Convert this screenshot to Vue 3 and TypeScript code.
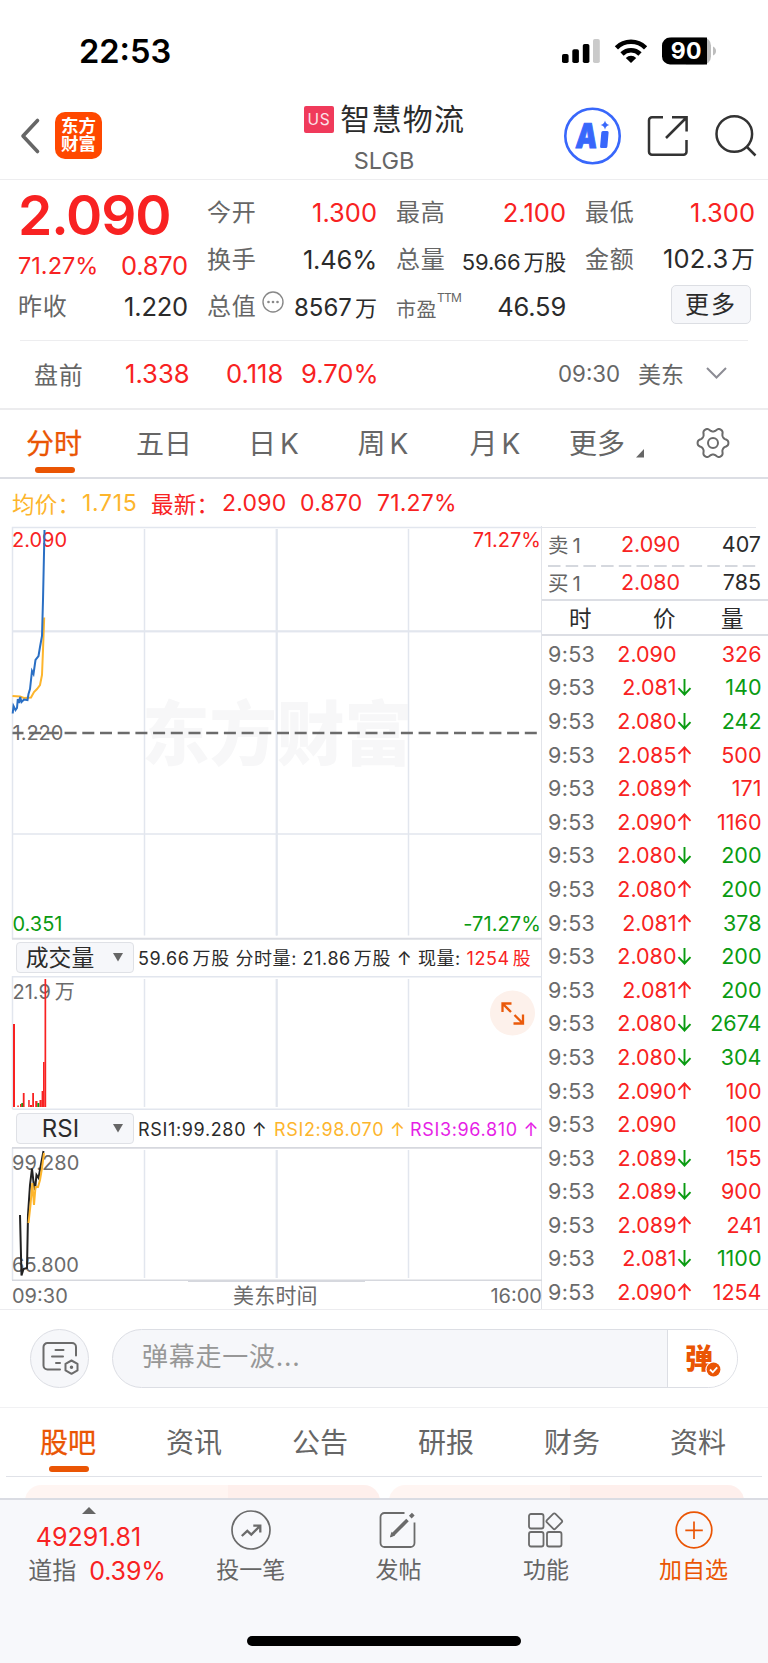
<script setup lang="ts">
type Dir = 'up' | 'down' | ''
interface Tick { price: string; dir: Dir; vol: string; side: 'red' | 'green' }

const t = (price: string, dir: Dir, vol: string, side: 'red' | 'green'): Tick => ({ price, dir, vol, side })
const ticks: Tick[] = [
  t('2.090', '', '326', 'red'),
  t('2.081', 'down', '140', 'green'),
  t('2.080', 'down', '242', 'green'),
  t('2.085', 'up', '500', 'red'),
  t('2.089', 'up', '171', 'red'),
  t('2.090', 'up', '1160', 'red'),
  t('2.080', 'down', '200', 'green'),
  t('2.080', 'up', '200', 'green'),
  t('2.081', 'up', '378', 'green'),
  t('2.080', 'down', '200', 'green'),
  t('2.081', 'up', '200', 'green'),
  t('2.080', 'down', '2674', 'green'),
  t('2.080', 'down', '304', 'green'),
  t('2.090', 'up', '100', 'red'),
  t('2.090', '', '100', 'red'),
  t('2.089', 'down', '155', 'red'),
  t('2.089', 'down', '900', 'red'),
  t('2.089', 'up', '241', 'red'),
  t('2.081', 'down', '1100', 'green'),
  t('2.090', 'up', '1254', 'red'),
]

const newsTabs = ['股吧', '资讯', '公告', '研报', '财务', '资料']
const columns = [144.5, 276.5, 408.5]

interface Bar { x: number; y: number; w: number; c: string }
const bars: Bar[] = [
  { x: 13, y: 1024, w: 2, c: '#f82222' },
  { x: 17.3, y: 1105.5, w: 1.5, c: '#f82222' },
  { x: 20, y: 1104, w: 1.5, c: '#f82222' },
  { x: 21.3, y: 1103, w: 2, c: '#0a9b12' },
  { x: 22.8, y: 1093, w: 1.8, c: '#f82222' },
  { x: 28.2, y: 1100, w: 1.5, c: '#f82222' },
  { x: 30, y: 1105, w: 2, c: '#f82222' },
  { x: 32.2, y: 1093, w: 1.8, c: '#f82222' },
  { x: 35.2, y: 1101, w: 2.3, c: '#f82222' },
  { x: 37.4, y: 1103, w: 2, c: '#0a9b12' },
  { x: 39.5, y: 1100, w: 2.2, c: '#f82222' },
  { x: 41.6, y: 1091, w: 1.6, c: '#f82222' },
  { x: 43, y: 1062, w: 1.6, c: '#f82222' },
  { x: 44.5, y: 979, w: 1.7, c: '#f82222' },
]

const gearPath = (() => {
  const pts: string[] = []
  for (let i = 0; i < 120; i++) {
    const a = (i / 120) * Math.PI * 2
    const r = 13.5 + 1.9 * Math.tanh(1.3 * Math.cos(6 * a)) / Math.tanh(1.3)
    pts.push(`${(17 + r * Math.cos(a)).toFixed(2)} ${(17 + r * Math.sin(a)).toFixed(2)}`)
  }
  return `M${pts.join('L')}Z`
})()
</script>

<template>
  <div class="page">
    <div class="status">
      <span class="clock">22:53</span>
      <svg class="sys" width="160" height="40" viewBox="558 32 160 40">
        <rect x="562" y="54" width="6.6" height="9" rx="1.8" />
        <rect x="572.3" y="49.3" width="6.6" height="13.7" rx="1.8" />
        <rect x="582.8" y="44" width="6.6" height="19" rx="1.8" />
        <rect x="593" y="39" width="6.8" height="24" rx="1.8" fill="#cacaca" />
        <g fill="none" stroke="#000" stroke-width="4.6">
          <path d="M616.4 47.8a20.8 20.8 0 0 1 29.2 0" />
          <path d="M622 54a12.8 12.8 0 0 1 18 0" />
        </g>
        <path d="M631 63l-5.2-5.1a7.6 7.6 0 0 1 10.4 0z" />
        <path d="M671 37.5h32a8 8 0 0 1 8 8v11a8 8 0 0 1-8 8h-17z" fill="#bdbdbd" />
        <path d="M707 37.6v26.800h-37a8 8 0 0 1-8-8v-10.800a8 8 0 0 1 8-8z" />
        <path d="M713 46.500q3 1.500 3 4.500t-3 4.500z" fill="#bdbdbd" />
        <text x="686.200" y="59.400" text-anchor="middle" class="batt">90</text>
      </svg>
    </div>

    <header class="head">
      <svg class="back" width="24" height="40" viewBox="0 0 24 40"><path d="M18.500 4.500L4 20L18.500 35.500" fill="none" stroke="#666" stroke-width="3.600" stroke-linecap="round" stroke-linejoin="round" /></svg>
      <div class="logo"><span>东方</span><span>财富</span></div>
      <div class="title">
        <div class="name"><span class="us">US</span><span class="cn">智慧物流</span></div>
        <div class="code">SLGB</div>
      </div>
      <svg class="acts" width="204" height="64" viewBox="560 104 204 64">
        <circle cx="592.500" cy="136" r="27.200" fill="#fff" stroke="#3867fb" stroke-width="2.600" />
        <g transform="translate(575 147.500) skewX(-5)">
          <text x="0" y="0" class="ai" textLength="21.500" lengthAdjust="spacingAndGlyphs">A</text>
          <rect x="25" y="-16.500" width="7.300" height="17" rx="1.500" fill="#3867fb" />
        </g>
        <path d="M605 120.500q.8 3.900 4.500 4.500q-3.700.6-4.500 4.700q-.8-4.100-4.500-4.700q3.700-.6 4.500-4.500z" fill="#3867fb" />
        <g fill="none" stroke="#333" stroke-width="2.500">
          <path d="M663 117.300h-11a3 3 0 0 0-3 3v31.500a3 3 0 0 0 3 3h31.500a3 3 0 0 0 3-3V140" />
          <path d="M672 117.300h14.600v14.200M686 118l-20 20" />
          <circle cx="734.300" cy="134" r="17.800" />
          <path d="M746.500 146.500l9 9" />
        </g>
      </svg>
    </header>

    <section class="quote">
      <div class="stats">
        <div class="cell big">2.090</div>
        <div class="cell"><label>今开</label><b class="red">1.300</b></div>
        <div class="cell"><label>最高</label><b class="red">2.100</b></div>
        <div class="cell"><label>最低</label><b class="red">1.300</b></div>

        <div class="cell chg"><span class="pct">71.27%</span><b class="red">0.870</b></div>
        <div class="cell"><label>换手</label><b>1.46%</b></div>
        <div class="cell"><label>总量</label><b class="small">59.66<i>万股</i></b></div>
        <div class="cell"><label>金额</label><b class="wide">102.3<i>万</i></b></div>

        <div class="cell"><label>昨收</label><b>1.220</b></div>
        <div class="cell">
          <label>总值</label>
          <svg class="dots" width="24" height="24" viewBox="0 0 24 24">
            <circle cx="12" cy="12" r="10" fill="none" stroke="#888" stroke-width="1.400" />
            <circle cx="7.500" cy="12" r="1.300" fill="#888" /><circle cx="12" cy="12" r="1.300" fill="#888" /><circle cx="16.500" cy="12" r="1.300" fill="#888" />
          </svg>
          <b class="mid">8567<i>万</i></b>
        </div>
        <div class="cell"><label class="pe">市盈<sup>TTM</sup></label><b>46.59</b></div>
        <div class="cell"><button class="more">更多</button></div>
      </div>
      <div class="pre">
        <span class="lab">盘前</span>
        <span class="red">1.338</span><span class="red">0.118</span><span class="red">9.70%</span>
        <span class="time">09:30</span><span class="zone">美东</span>
        <svg width="24" height="16" viewBox="0 0 24 16"><path d="M3 3l9.500 9.500L22 3" fill="none" stroke="#8c8c94" stroke-width="2" /></svg>
      </div>
    </section>

    <nav class="ktabs">
      <span class="on">分时</span>
      <span>五日</span>
      <span class="k">日<em>K</em></span>
      <span class="k">周<em>K</em></span>
      <span class="k">月<em>K</em></span>
      <span>更多</span>
      <svg class="tri" width="8" height="9" viewBox="0 0 8 9"><path d="M8 0v8.500H0z" fill="#666" /></svg>
      <svg class="gear" width="34" height="34" viewBox="0 0 34 34" fill="none" stroke="#6b6b6b" stroke-width="2">
        <path :d="gearPath" /><circle cx="17" cy="17" r="5" />
      </svg>
    </nav>

    <div class="info">
      <span class="avg">均价：</span><span class="avg">1.715</span>
      <span class="red">最新：</span><span class="red">2.090</span><span class="red">0.870</span><span class="red">71.27%</span>
    </div>

    <main class="board">
      <div class="left">
        <svg width="542" height="414" viewBox="0 526 542 414">
          <text x="142" y="760" class="wm" textLength="270" lengthAdjust="spacingAndGlyphs">东方财富</text>
          <g stroke="#e2e6ee" stroke-width="1.500" fill="none">
            <path d="M12.500 939V527.500H542" />
            <path v-for="c in columns" :key="c" :d="`M${c} 529V935.500`" />
            <path d="M12.500 631.500H542M12.500 834H542" />
            <path d="M276.800 529V935.500M12.500 631.300H542" stroke-width="2" />
          </g>
          <path d="M12 938.700H542" stroke="#dadce2" stroke-width="2" />
          <text x="12.500" y="931" class="ax green">0.351</text>
          <text x="541" y="931" text-anchor="end" class="ax green" letter-spacing=".1">-71.27%</text>
          <text x="541" y="547.300" text-anchor="end" class="ax red">71.27%</text>
          <text x="12.500" y="740" class="ax">1.220</text>
          <path d="M12.500 733H541" stroke="#6b6b6b" stroke-width="2.300" stroke-dasharray="12 5.700" stroke-dashoffset="1" />
          <text x="12" y="547.300" class="ax red">2.090</text>
          <path d="M12.500 696L20 696.500L24 698L31 697.500L34 692L37 689L40 685L42 675L43 650L44.200 617.500" fill="none" stroke="#fdb52c" stroke-width="2" />
          <path d="M12.700 713.500L13.500 706L15.500 710L17 708L17.800 699L19 703L20.200 697L21.500 702L24 699.500L27.500 700L28.500 694L30 689L32 671L33.500 674L35.500 660L38.500 656L40 647L42 636L43 600L44.500 530" fill="none" stroke="#2a6fc4" stroke-width="2" />
        </svg>

        <div class="bar">
          <div class="select"><span>成交量</span><svg width="10" height="9" viewBox="0 0 10 9"><path d="M0 0h10L5 8.500z" fill="#666" /></svg></div>
          <p class="volline">59.66<i>万股</i> 分时量: 21.86<i>万股</i> ↑ 现量: <span class="red">1254<i>股</i></span></p>
        </div>

        <svg width="542" height="134" viewBox="0 976 542 134">
          <g stroke="#e2e6ee" stroke-width="1.500" fill="none">
            <path d="M12.500 1109V976.800H542M12.500 1109.200H542" />
            <path v-for="c in columns" :key="c" :d="`M${c} 979V1107`" />
            <path d="M276.800 979V1107" stroke-width="2" />
          </g>
          <text x="12.500" y="999" class="ax">21.9<tspan dx="4">万</tspan></text>
          <rect v-for="(b, i) in bars" :key="i" :x="b.x" :y="b.y" :width="b.w" :height="1107 - b.y" :fill="b.c" />
          <circle cx="512.500" cy="1013" r="22.500" fill="#fdf1eb" />
          <g fill="none" stroke="#ea5a0b" stroke-width="2.300">
            <path d="M502.500 1012V1003.500H511.500M503 1004L511 1012" />
            <path d="M523 1014.500V1023.500H513.500M522.500 1023L514.500 1015" />
          </g>
        </svg>

        <div class="bar rsi">
          <div class="select"><span>RSI</span><svg width="10" height="9" viewBox="0 0 10 9"><path d="M0 0h10L5 8.500z" fill="#666" /></svg></div>
          <p class="rsiline"><span>RSI1:99.280 ↑</span><span class="avg">RSI2:98.070 ↑</span><span class="mag">RSI3:96.810 ↑</span></p>
        </div>

        <svg width="542" height="135" viewBox="0 1147 542 135">
          <g stroke="#e2e6ee" stroke-width="1.500" fill="none">
            <path d="M12.500 1280V1148" />
            <path v-for="c in columns" :key="c" :d="`M${c} 1150V1278`" />
            <path d="M276.800 1150V1278" stroke-width="2" />
          </g>
          <path d="M12 1147.900H542M12 1280.300H542" stroke="#d6d8de" stroke-width="1.600" />
          <path d="M188 1281.300H365" stroke="#d6d8de" stroke-width="1.200" />
          <text x="12" y="1169.500" class="ax">99.280</text>
          <text x="12" y="1271.500" class="ax">65.800</text>
          <path d="M20 1215L21.500 1275.500L23.500 1269L27 1268L28 1215L30 1185L32 1168.500L33.500 1182L35 1190L36.500 1175L38.500 1178L40.500 1167L43.500 1151" fill="none" stroke="#222" stroke-width="2" />
          <path d="M28.500 1223L30.500 1205L32.300 1183L34 1205L35.500 1187L38 1187L40 1180L42 1168L44 1153" fill="none" stroke="#fdb52c" stroke-width="2" />
        </svg>

        <div class="axis"><span>09:30</span><span class="et">美东时间</span><span>16:00</span></div>
      </div>

      <aside class="right">
        <div class="ob sell"><span>卖<em>1</em></span><b class="red">2.090</b><b>407</b></div>
        <svg class="dash" width="226" height="2" viewBox="0 0 226 2"><path d="M6 1H214" stroke="#d5d8de" stroke-width="2" stroke-dasharray="12.500 5.200" /></svg>
        <div class="ob"><span>买<em>1</em></span><b class="red">2.080</b><b>785</b></div>
        <div class="th"><span>时</span><span>价</span><span>量</span></div>
        <div v-for="(r, i) in ticks" :key="i" class="tick">
          <span class="tm">9:53</span>
          <span class="pr red">{{ r.price }}</span>
          <svg width="16" height="20" viewBox="0 0 16 20" fill="none" stroke-width="1.900">
            <path v-if="r.dir === 'up'" d="M7.500 18V2.500M1.500 8.800L7.500 2.500L13.500 8.800" stroke="#f82222" />
            <path v-if="r.dir === 'down'" d="M7.500 2V17.500M1.500 11.200L7.500 17.500L13.500 11.200" stroke="#0a9b12" />
          </svg>
          <span class="vl" :class="r.side">{{ r.vol }}</span>
        </div>
      </aside>
    </main>

    <section class="danmu">
      <div class="round">
        <svg width="38" height="36" viewBox="0 0 38 36" fill="none" stroke="#6b6b6b" stroke-width="2" stroke-linecap="round">
          <path d="M19 28.500H6.500a4 4 0 0 1-4-4V6a4 4 0 0 1 4-4H31a4 4 0 0 1 4 4v8.500" />
          <path d="M14.500 9h8M11 15.500h11M15 22h4" />
          <path d="M30.500 19.500l6 3.300v6.600l-6 3.400l-6-3.400v-6.600z" stroke-linejoin="round" />
          <circle cx="30.500" cy="26.200" r="1" fill="#6b6b6b" stroke-width="1.500" />
        </svg>
      </div>
      <div class="pill">
        <span class="ph">弹幕走一波...</span>
        <div class="send">
          <svg width="42" height="48" viewBox="0 -8 42 48">
            <text x="2" y="28" class="dan">弹</text>
            <circle cx="30.500" cy="28.500" r="8" fill="#fff" />
            <circle cx="30.500" cy="28.500" r="6.900" fill="#ea5504" />
            <path d="M27 28.500l2.800 2.800l4.400-5" fill="none" stroke="#fff" stroke-width="1.800" />
          </svg>
        </div>
      </div>
    </section>

    <nav class="ntabs">
      <span v-for="(n, i) in newsTabs" :key="n" :class="{ on: i === 0 }">{{ n }}</span>
    </nav>
    <div class="cards"><div class="card" /><div class="card" /></div>

    <footer class="foot">
      <div class="idx">
        <svg width="14" height="7" viewBox="0 0 14 7"><path d="M0 7L7 0l7 7z" fill="#666" /></svg>
        <div class="iv">49291.81</div>
        <div class="ic"><span>道指</span><b>0.39%</b></div>
      </div>
      <div class="act">
        <svg width="44" height="44" viewBox="0 0 44 44" fill="none" stroke="#6b6b6b" stroke-width="1.700">
          <circle cx="22" cy="22" r="19" />
          <path d="M12.800 28l5.500-5.200l4 3.800l8.500-8.500M24.300 17.600h7v7" stroke-width="2.300" />
        </svg>
        <span>投一笔</span>
      </div>
      <div class="act">
        <svg width="44" height="44" viewBox="0 0 44 44" fill="none" stroke="#6b6b6b" stroke-width="1.800">
          <path d="M28.500 5H8.500a4 4 0 0 0-4 4v26a4 4 0 0 0 4 4h26a4 4 0 0 0 4-4V14.500" />
          <path d="M16.500 27L31.500 12" stroke-width="3.600" /><path d="M14.500 29l1.200-4.500l2.700 2.700z" fill="#6b6b6b" stroke-width="1" /><path d="M34.300 9.200L37.300 6.200" stroke-width="3.800" />
        </svg>
        <span>发帖</span>
      </div>
      <div class="act">
        <svg width="44" height="44" viewBox="0 0 44 44" fill="none" stroke="#6b6b6b" stroke-width="1.800">
          <rect x="5" y="6" width="14.500" height="14.500" rx="2" /><rect x="5" y="24" width="14.500" height="14.500" rx="2" /><rect x="23" y="24" width="14.500" height="14.500" rx="2" />
          <rect x="24.300" y="7.300" width="12" height="12" rx="1.600" transform="rotate(45 30.300 13.300)" />
        </svg>
        <span>功能</span>
      </div>
      <div class="act org">
        <svg width="44" height="44" viewBox="0 0 44 44" fill="none" stroke="#ea5504" stroke-width="1.700">
          <circle cx="22" cy="22" r="17.800" /><path d="M22 13.500v17.500M13.300 22.300h17.500" />
        </svg>
        <span>加自选</span>
      </div>
      <div class="home" />
    </footer>
  </div>
</template>

<style>
body { background: #fff; }
</style>

<style scoped>
.page { width: 768px; height: 1663px; overflow: hidden; display: flex; flex-direction: column; background: #fff; color: #2b2b2b; font-family: Inter, "Noto Sans CJK SC", sans-serif; font-size: 24px; box-sizing: border-box; }
.page * { box-sizing: border-box; }
b { font-weight: 400; }
i, em { font-style: normal; }
.red { color: #f82222; fill: #f82222; }
.green { color: #0a9b12; fill: #0a9b12; }
.avg { color: #fdb52c; }
.mag { color: #e61ee6; }

.status { height: 100px; flex: none; display: flex; justify-content: space-between; align-items: flex-start; padding: 32px 50px 0 79px; }
.clock { font-size: 32.600px; font-weight: 600; line-height: 39px; color: #000; }
.batt { font: 700 23px Inter, sans-serif; fill: #fff; letter-spacing: .3px; }

.head { height: 80px; flex: none; display: flex; align-items: center; padding: 0 4px 8px 19px; border-bottom: 1.500px solid #ededef; }
.back { flex: none; }
.logo { width: 47px; height: 47px; margin-left: 12px; flex: none; border-radius: 10px; background: #ff4800; color: #fff; font-size: 17.500px; font-weight: 700; line-height: 18.500px; display: flex; flex-direction: column; align-items: center; justify-content: center; padding-bottom: 1px; }
.title { flex: 1; display: flex; flex-direction: column; align-items: center; padding: 7px 0 0 106px; }
.name { display: flex; align-items: center; height: 42px; }
.us { width: 30px; height: 27px; background: #f03a5b; color: #fbe3e8; border-radius: 2px; font-size: 15.500px; line-height: 27px; text-align: center; letter-spacing: .5px; margin: 0 6.500px 0 1px; }
.cn { font-size: 30px; letter-spacing: 1.200px; line-height: 40px; }
.code { font-size: 23.500px; line-height: 42px; height: 40px; color: #666; }
.acts { flex: none; }

.quote { flex: none; height: 230px; border-bottom: 2px solid #ececee; display: flex; flex-direction: column; }
.stats { display: grid; grid-template-columns: repeat(4, 170px); column-gap: 19px; grid-template-rows: 56px 47px 47px; padding: 0 0 0 18px; height: 159.500px; }
.cell { display: flex; align-items: center; justify-content: space-between; font-size: 25.500px; line-height: 30px; }
.cell:nth-child(-n+4) { padding-top: 9px; }
.cell:nth-child(-n+4) b { letter-spacing: 0; }
.cell.big { font-size: 55px; font-weight: 600; color: #f82222; letter-spacing: -1.100px; line-height: 60px; padding-top: 13.500px; }
.cell label { font-size: 24px; letter-spacing: .7px; color: #666; }
.cell b { letter-spacing: -.2px; }
.cell b i { margin-left: 3px; font-size: .92em; }
.cell .wide { letter-spacing: .2px; }
.cell .small { font-size: 22px; padding-top: 4px; }
.cell .small i { font-size: 21.500px; }
.cell .mid { font-size: 24px; padding-top: 3px; margin-left: auto; letter-spacing: 0; }
.cell .pct { font-size: 23.500px; color: #f82222; }
.chg { padding-top: 13px; }
.dots { margin: -10px 0 0 5px; flex: none; }
.cell label.pe { font-size: 20px; position: relative; top: 1.500px; letter-spacing: .5px; }
.pe sup { font-size: 12px; letter-spacing: -.8px; line-height: 1; vertical-align: 15px; }
.more { margin: -4px 4.500px 0 auto; width: 80px; height: 39px; border: 1.500px solid #dcdee3; border-radius: 5px; background: #f6f7fa; font: 24px/36px Inter, "Noto Sans CJK SC", sans-serif; letter-spacing: 2px; color: #2b2b2b; padding: 0 0 0 1px; }
.pre { margin: 0 20px; flex: 1; border-top: 1.500px solid #ededef; display: grid; grid-template-columns: 91px 101px 75px 257px 80px 66px 26px; align-items: center; padding: 0 0 2px 14px; font-size: 25.600px; }
.pre .lab { font-size: 24px; letter-spacing: .7px; color: #666; }
.pre .time { font-size: 22.300px; color: #666; }
.pre .zone { font-size: 23px; color: #666; }

.ktabs { flex: none; height: 69px; border-bottom: 2px solid #dcdee4; display: flex; align-items: center; padding-left: 26px; font-size: 28px; color: #666; }
.ktabs span { line-height: 66px; height: 66px; width: 110px; }
.ktabs span.k { width: 109.500px; padding-left: 2px; }
.ktabs span.k:nth-child(4) { width: 112px; }
.ktabs em { margin-left: 4px; font-size: 28px; }
.ktabs span.k:nth-child(5) { width: 101.500px; }
.ktabs span:nth-child(6) { width: 66.500px; }
.ktabs .on, .ntabs .on { color: #ea5504; -webkit-text-stroke: .3px #ea5504; position: relative; }
.ktabs .on::after, .ntabs .on::after { content: ""; position: absolute; left: 9px; bottom: 4px; width: 40px; height: 6px; border-radius: 3px; background: #ea5504; }
.tri { margin-top: 20px; }
.gear { margin-left: 52px; margin-top: -2px; }

.info { flex: none; height: 47px; display: grid; grid-template-columns: 70px 69px 71px 78px 77px 90px; padding: 1px 0 0 12px; align-items: center; font-size: 23px; letter-spacing: .2px; }
.info span:nth-child(odd):nth-child(-n+3) { font-size: 22.500px; }
.info span:nth-child(2) { letter-spacing: .7px; }

.board { flex: none; height: 783.500px; display: flex; border-bottom: 1.500px solid #ececef; }
.left { width: 542px; flex: none; display: flex; flex-direction: column; border-right: 1.500px solid #e2e4e9; }
.left > svg { flex: none; display: block; }
.ax { font-size: 20px; }
.ax:not(.red):not(.green) { fill: #6b6b6b; }
.wm { font-size: 70px; font-weight: 900; fill: #f7f7f8; }
.bar { flex: none; height: 36px; padding: 2px 0 0 16px; display: flex; align-items: flex-start; }
.bar.rsi { height: 37px; padding-top: 3px; }
.select { width: 118px; height: 31px; flex: none; border: 1.500px solid #dfe1e6; border-radius: 4px; background: #f6f7fa; display: flex; align-items: center; font-size: 22.800px; line-height: 28px; }
.select span { width: 76px; text-align: center; margin-left: 5px; }
.rsi .select span { font-size: 24px; padding-left: 1px; }
.select svg { margin-left: 15px; }
.bar p { margin: 0 0 0 4px; font-size: 18px; line-height: 33px; height: 31px; white-space: nowrap; }
.volline { letter-spacing: .58px; }
.volline i { margin-left: 3px; }
.rsiline { letter-spacing: .65px; }
.rsiline span { display: inline-block; width: 136px; }
.axis { display: grid; grid-template-columns: 221px 1fr auto; padding: 0 0 0 12px; font-size: 20px; line-height: 28px; height: 27px; color: #6b6b6b; }
.axis .et { font-size: 21px; letter-spacing: .2px; }
.axis span:last-child { margin-right: -1px; }

.right { flex: 1; display: flex; flex-direction: column; }
.ob { height: 33px; flex: none; display: grid; grid-template-columns: 73px 70px 1fr; padding: 0 7px 2px 6px; align-items: center; font-size: 21.500px; }
.ob.sell { height: 37px; margin: 1px 12px 0 0; border-top: 1.500px solid #e2e4e9; padding-right: 0; padding-bottom: 4px; }
.ob.sell b:last-child { margin-right: -5px; }
.ob span { font-size: 20.500px; color: #666; }
.ob em { margin-left: 4px; }
.ob b:last-child { text-align: right; }
.dash { flex: none; display: block; margin-top: 1px; }
.ob:nth-child(3) { height: 32px; }
.th { flex: none; height: 37px; border: solid #dcdee4; border-width: 2px 0; display: grid; grid-template-columns: 84px 68px 1fr; padding-left: 27px; font-size: 22.500px; line-height: 36px; margin-bottom: 1px; }
.tick { flex: none; height: 33.600px; display: flex; align-items: center; padding: 0 6.500px 0 6px; font-size: 21.500px; line-height: 28px; }
.tick .tm { width: 50px; color: #6b6b6b; letter-spacing: .3px; }
.tick .pr { width: 78.500px; text-align: right; }
.tick .vl { flex: 1; text-align: right; }

.danmu { flex: none; height: 98px; display: flex; align-items: center; padding: 0 30px; border-bottom: 1.500px solid #f1f1f3; }
.round { width: 59px; height: 59px; border-radius: 50%; border: 1.500px solid #dcdee4; background: #f6f7fa; display: flex; align-items: center; justify-content: center; padding: 1px 0 0 1px; }
.pill { margin-left: 23px; width: 626px; height: 59px; border: 1.500px solid #dcdee4; border-radius: 30px; background: #f6f7fa; display: flex; overflow: hidden; }
.ph { flex: 1; padding-left: 29px; font-size: 26px; line-height: 54px; letter-spacing: .75px; color: #979797; }
.send { width: 70px; background: #fff; border-left: 1.500px solid #dcdee4; padding: 3px 0 0 15px; }
.dan { font: 800 28px/1 "Noto Sans CJK SC", sans-serif; fill: #ea5504; }

.ntabs { flex: none; height: 69px; margin: 0 6px; border-bottom: 1.500px solid #e0e2e8; display: flex; padding-left: 34px; font-size: 28px; line-height: 71px; color: #666; }
.ntabs span { width: 126px; flex: none; height: 69px; }
.ntabs .on::after { bottom: 4.500px; }
.cards { flex: none; height: 21.500px; padding: 8px 0 0 25px; display: flex; gap: 9px; overflow: hidden; }
.card { width: 355px; height: 40px; border-radius: 16px; background: linear-gradient(90deg, #fff5f2 0 203px, #feefec 203px); }
.card + .card { background: linear-gradient(90deg, #fff5f2 0 181px, #feefec 181px); }

.foot { flex: 1; border-top: 2px solid #dadce3; background: #f7f8fb; position: relative; display: flex; padding: 8px 0 0 20px; }
.idx { width: 157px; display: flex; flex-direction: column; align-items: center; }
.idx > svg { margin: -1px 0 0 -20px; }
.iv { font-size: 25px; color: #f82222; line-height: 32px; margin: 7px 20px 0 0; letter-spacing: .1px; }
.ic { display: flex; align-items: center; line-height: 36px; font-size: 24px; color: #666; margin-left: -3px; }
.ic b { color: #f82222; font-size: 25px; letter-spacing: -.1px; margin-left: 13px; }
.act { width: 147.600px; display: flex; flex-direction: column; align-items: center; color: #666; font-size: 23px; line-height: 32px; }
.act svg { margin-bottom: 2px; }
.org { color: #ea5504; }
.home { position: absolute; left: 247px; bottom: 17px; width: 274px; height: 10px; border-radius: 5px; background: #000; }
.ai { font: 900 34px Inter, sans-serif; fill: #3867fb; stroke: #3867fb; stroke-width: 1px; }
</style>
